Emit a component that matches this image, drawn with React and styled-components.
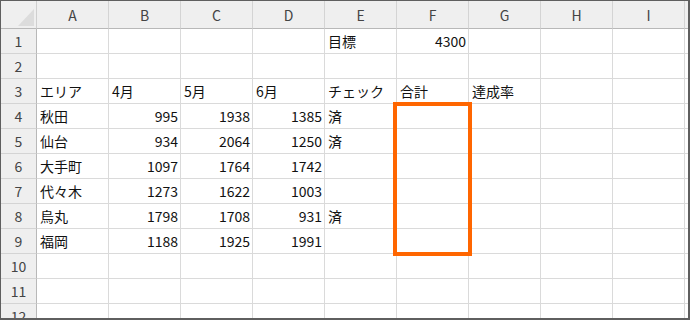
import styled, { createGlobalStyle } from "styled-components";

const GlobalStyle = createGlobalStyle`
  body {
    margin: 0;
    background: #fff;
    font-family: "Noto Sans CJK JP", "Noto Sans", sans-serif;
  }
`;

const columns = ["A", "B", "C", "D", "E", "F", "G", "H", "I"];

// each row: [A, B, C, D, E, F, G]
const rows = [
  ["", "", "", "", "目標", 4300, ""],
  ["", "", "", "", "", "", ""],
  ["エリア", "4月", "5月", "6月", "チェック", "合計", "達成率"],
  ["秋田", 995, 1938, 1385, "済", "", ""],
  ["仙台", 934, 2064, 1250, "済", "", ""],
  ["大手町", 1097, 1764, 1742, "", "", ""],
  ["代々木", 1273, 1622, 1003, "", "", ""],
  ["烏丸", 1798, 1708, 931, "済", "", ""],
  ["福岡", 1188, 1925, 1991, "", "", ""],
  ["", "", "", "", "", "", ""],
  ["", "", "", "", "", "", ""],
  ["", "", "", "", "", "", ""],
];

function App() {
  return (
    <>
      <GlobalStyle />
      <Sheet>
        <Grid>
          <Corner>
            <CornerMark viewBox="0 0 16 17">
              <polygon points="16,0 16,17 0,17" fill="#dcdcdc" />
            </CornerMark>
          </Corner>
          {columns.map((c) => (
            <ColHeader key={c}>{c}</ColHeader>
          ))}
          <ColHeader $last />
          {rows.map((row, r) => (
            <Row key={r} row={row} index={r + 1} />
          ))}
        </Grid>
        <Highlight />
      </Sheet>
    </>
  );
}

function Row({ row, index }) {
  const cells = [...row, "", ""];
  return (
    <>
      <RowHeader>{index}</RowHeader>
      {cells.map((v, i) => (
        <Cell key={i} $num={typeof v === "number"}>
          {v}
        </Cell>
      ))}
      <Cell $last />
    </>
  );
}

export default App;

const Sheet = styled.div`
  position: relative;
  width: 690px;
  height: 320px;
  box-sizing: border-box;
  border-style: solid;
  border-color: #5f5f5f;
  border-width: 1px 2px 2px 1px;
  overflow: hidden;
`;

const Grid = styled.div`
  display: grid;
  grid-template-columns: 36px repeat(9, 72px) 1fr;
  grid-template-rows: 28px;
  grid-auto-rows: 25px;
`;

const Corner = styled.div`
  position: relative;
  background: #efefef;
  box-sizing: border-box;
  border-right: 1px solid #cfcfcf;
  border-bottom: 1px solid #b8b8b8;
`;

const CornerMark = styled.svg`
  position: absolute;
  left: 17px;
  top: 8px;
  width: 16px;
  height: 17px;
`;

const ColHeader = styled.div`
  display: flex;
  align-items: center;
  justify-content: center;
  background: #efefef;
  color: #444;
  font-size: 14px;
  box-sizing: border-box;
  border-right: ${(p) => (p.$last ? "none" : "1px solid #d4d4d4")};
  border-bottom: 1px solid #b8b8b8;
`;

const RowHeader = styled.div`
  display: flex;
  align-items: center;
  justify-content: center;
  background: #efefef;
  color: #444;
  font-size: 14px;
  box-sizing: border-box;
  border-right: 1px solid #b8b8b8;
  border-bottom: 1px solid #d4d4d4;
`;

const Cell = styled.div`
  display: flex;
  align-items: center;
  justify-content: ${(p) => (p.$num ? "flex-end" : "flex-start")};
  padding: 0 2px 0 3px;
  box-sizing: border-box;
  font-size: 14px;
  color: #111;
  white-space: nowrap;
  overflow: hidden;
  border-right: ${(p) => (p.$last ? "none" : "1px solid #dadada")};
  border-bottom: 1px solid #dadada;
`;

const Highlight = styled.div`
  position: absolute;
  left: 392px;
  top: 101px;
  width: 79px;
  height: 154px;
  box-sizing: border-box;
  border: 4px solid #ff6600;
  pointer-events: none;
`;
